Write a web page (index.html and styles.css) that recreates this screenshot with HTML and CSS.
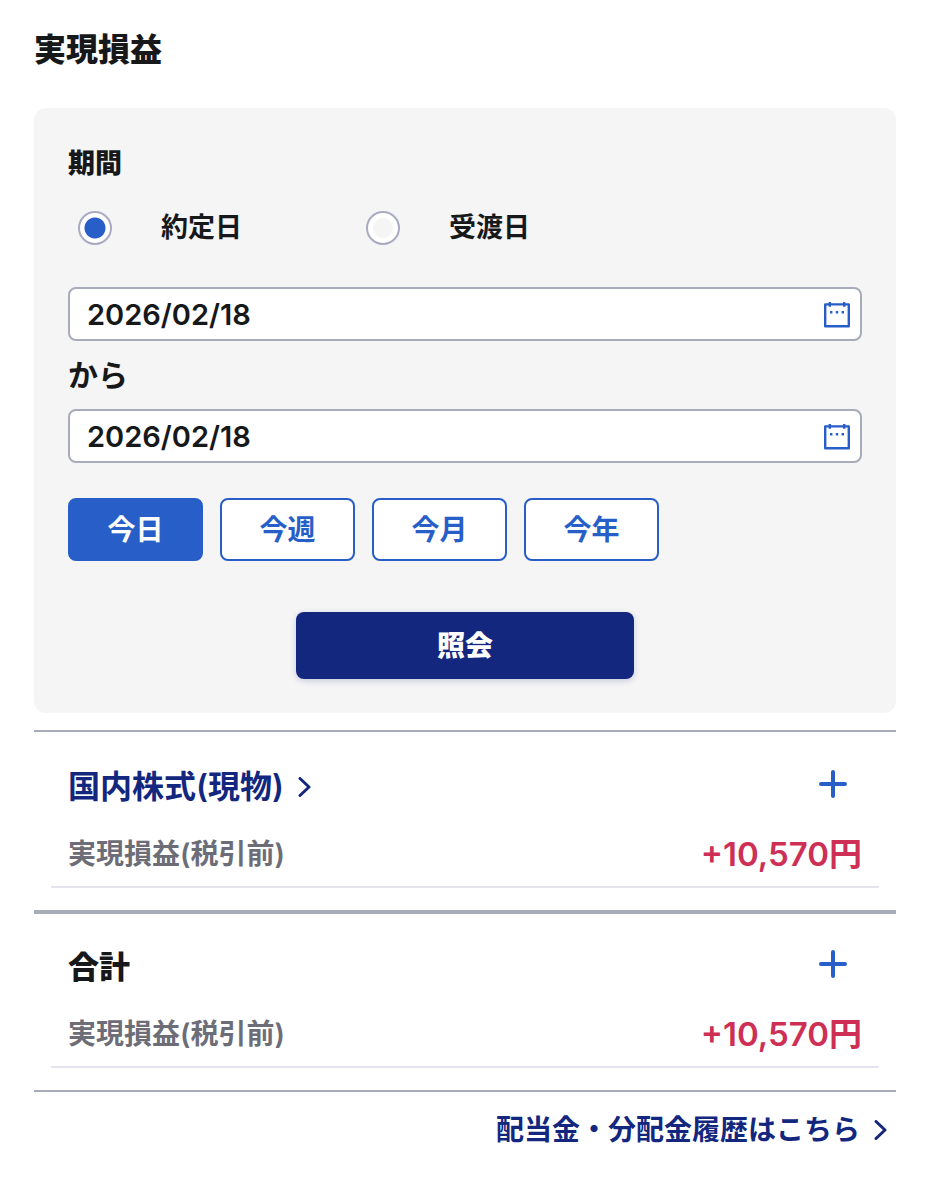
FILE: index.html
```html
<!DOCTYPE html>
<html lang="ja">
<head>
<meta charset="utf-8">
<meta name="viewport" content="width=device-width, initial-scale=1">
<title>実現損益</title>
<link rel="stylesheet" href="styles.css">
</head>
<body>
<main class="page">
  <h1 class="page-title">実現損益</h1>

  <form class="filter">
    <h2 class="filter-title">期間</h2>
    <div class="radios">
      <label class="radio"><input class="radio-input" type="radio" name="basis" checked><span>約定日</span></label>
      <label class="radio"><input class="radio-input" type="radio" name="basis"><span>受渡日</span></label>
    </div>

    <div class="date-field">
      <input class="date-input" type="text" value="2026/02/18" aria-label="開始日">
      <button class="icon-button" type="button" aria-label="開始日を選択">
        <svg class="calendar" viewBox="0 0 28 28" aria-hidden="true">
          <path d="M2.200 4.400H25.800V26.200H2.200Z M6.800 2V6.800 M21.200 2V6.800" fill="none" stroke="currentColor" stroke-width="2.400" stroke-linejoin="round"/>
          <path d="M7 11h2.400v2.400H7z M12.800 11h2.400v2.400h-2.400z M18.600 11H21v2.400h-2.400z" fill="currentColor"/>
        </svg>
      </button>
    </div>
    <p class="date-between">から</p>
    <div class="date-field">
      <input class="date-input" type="text" value="2026/02/18" aria-label="終了日">
      <button class="icon-button" type="button" aria-label="終了日を選択">
        <svg class="calendar" viewBox="0 0 28 28" aria-hidden="true">
          <path d="M2.200 4.400H25.800V26.200H2.200Z M6.800 2V6.800 M21.200 2V6.800" fill="none" stroke="currentColor" stroke-width="2.400" stroke-linejoin="round"/>
          <path d="M7 11h2.400v2.400H7z M12.800 11h2.400v2.400h-2.400z M18.600 11H21v2.400h-2.400z" fill="currentColor"/>
        </svg>
      </button>
    </div>

    <div class="presets">
      <button class="preset preset-active" type="button">今日</button>
      <button class="preset" type="button">今週</button>
      <button class="preset" type="button">今月</button>
      <button class="preset" type="button">今年</button>
    </div>

    <button class="submit" type="button">照会</button>
  </form>

  <section class="result">
    <div class="result-head">
      <a class="result-link" href="#">国内株式(現物)
        <svg class="chevron" viewBox="0 0 14 20" aria-hidden="true"><path d="M2 1.500L11 10L2 18.500"/></svg>
      </a>
      <button class="icon-button" type="button" aria-label="国内株式(現物)の詳細を開く">
        <svg class="plus" viewBox="0 0 28 28" aria-hidden="true"><path d="M14 2V26M2 14H26"/></svg>
      </button>
    </div>
    <div class="result-row">
      <span class="result-label">実現損益(税引前)</span>
      <span class="amount">+10,570円</span>
    </div>
  </section>

  <section class="result result-total">
    <div class="result-head">
      <h2 class="result-title">合計</h2>
      <button class="icon-button" type="button" aria-label="合計の詳細を開く">
        <svg class="plus" viewBox="0 0 28 28" aria-hidden="true"><path d="M14 2V26M2 14H26"/></svg>
      </button>
    </div>
    <div class="result-row">
      <span class="result-label">実現損益(税引前)</span>
      <span class="amount">+10,570円</span>
    </div>
  </section>

  <footer class="history">
    <a class="history-link" href="#">配当金・分配金履歴はこちら
      <svg class="chevron" viewBox="0 0 14 20" aria-hidden="true"><path d="M2 1.500L11 10L2 18.500"/></svg>
    </a>
  </footer>
</main>
</body>
</html>
```

FILE: styles.css
```css
* {
  box-sizing: border-box;
}

body {
  margin: 0;
  background: #fff;
  color: #17181a;
  font-family: Inter, "Noto Sans CJK JP", sans-serif;
  font-size: 27px;
  font-weight: 600;
}

h1, h2, p {
  margin: 0;
}

button, input {
  margin: 0;
  font: inherit;
  color: inherit;
}

button {
  padding: 0;
  cursor: pointer;
}

a {
  color: #13277f;
  text-decoration: none;
}

.page {
  padding: 32px 34px;
}

.page-title {
  margin-bottom: 40px;
  font-size: 32px;
  font-weight: 900;
  line-height: 36px;
}

.filter {
  padding: 34px;
  border-radius: 12px;
  background: #f5f5f5;
}

.filter-title {
  font-size: 27px;
  font-weight: 900;
  line-height: 44px;
}

.radios {
  display: flex;
  margin: 25px 0 42px 10px;
}

.radio {
  display: flex;
  align-items: center;
  gap: 49px;
  min-width: 288px;
  line-height: 34px;
}

.radio-input {
  appearance: none;
  width: 34px;
  height: 34px;
  margin: 0;
  border: 2px solid #a8abc0;
  border-radius: 50%;
  background: radial-gradient(circle, #f5f5f5 9px, #fff 11px);
}

.radio-input:checked {
  background: radial-gradient(circle, #285ec7 10px, #fff 11px);
}

.date-field {
  display: flex;
  align-items: center;
  height: 54px;
  padding: 0 9px 0 17px;
  border: 2px solid #a8abba;
  border-radius: 8px;
  background: #fff;
}

.date-input {
  flex: 1;
  min-width: 0;
  padding: 0;
  border: 0;
  outline: 0;
  background: none;
  font-size: 29px;
}

.icon-button {
  display: flex;
  border: 0;
  background: none;
  color: #285ec7;
}

.calendar {
  width: 28px;
  height: 28px;
}

.date-between {
  font-size: 30px;
  line-height: 68px;
}

.presets {
  display: flex;
  gap: 17px;
  margin: 35px 0 51px;
}

.preset {
  width: 135px;
  height: 63px;
  padding-bottom: 4px;
  border: 2px solid #285ec7;
  border-radius: 8px;
  background: #fff;
  color: #285ec7;
  font-size: 28px;
}

.preset-active {
  background: #285ec7;
  color: #fff;
}

.submit {
  display: block;
  width: 338px;
  height: 67px;
  margin: 0 auto;
  padding-bottom: 4px;
  border: 0;
  border-radius: 8px;
  background: #13277f;
  box-shadow: 0 2px 6px #13277f33;
  color: #fff;
  font-size: 28px;
  font-weight: 900;
}

.result {
  margin-top: 17px;
  padding: 32px 17px 22px;
  border-top: 2px solid #a8abba;
}

.result-total {
  margin-top: 0;
  padding-top: 30px;
  border-top-width: 4px;
  border-bottom: 2px solid #a8abba;
}

.result-head {
  display: flex;
  align-items: center;
  justify-content: space-between;
  height: 40px;
  margin-bottom: 26px;
  padding: 0 32px 0 17px;
}

.result-link {
  display: flex;
  align-items: center;
  gap: 14px;
  font-size: 32px;
}

.result-link .chevron {
  margin-top: 5px;
}

.result-title {
  font-size: 31px;
  font-weight: 900;
}

.chevron {
  width: 14px;
  height: 20px;
  fill: none;
  stroke: currentColor;
  stroke-width: 3;
  stroke-linecap: round;
  stroke-linejoin: round;
}

.plus {
  width: 28px;
  height: 28px;
  fill: none;
  stroke: currentColor;
  stroke-width: 4;
  stroke-linecap: round;
}

.result-row {
  display: flex;
  align-items: center;
  justify-content: space-between;
  padding: 0 17px 8px;
  border-bottom: 2px solid #e4e4ee;
  line-height: 48px;
}

.result-label {
  color: #6c6d77;
  font-size: 28px;
}

.amount {
  color: #cd2f55;
  font-size: 33px;
}

.history {
  display: flex;
  justify-content: flex-end;
  padding: 18px 8px 0;
}

.history-link {
  display: flex;
  align-items: center;
  gap: 14px;
  font-size: 28px;
  line-height: 40px;
}
```
